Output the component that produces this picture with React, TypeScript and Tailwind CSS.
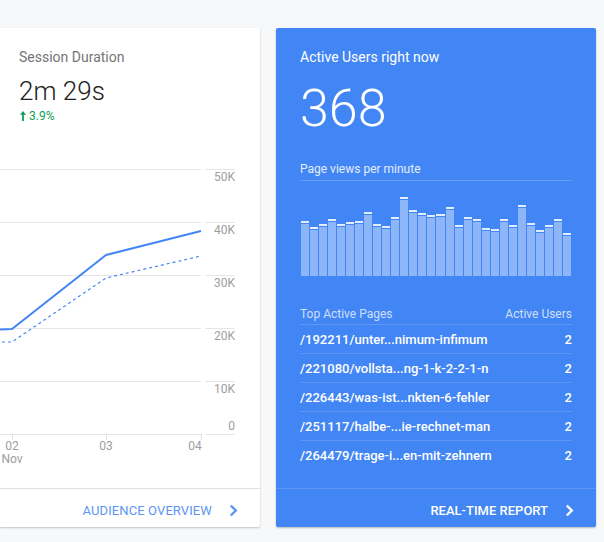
import { ComponentProps } from "react"

const bars = [55, 49, 52, 57, 52, 54, 55, 64, 52, 50, 59, 79, 66, 63, 61, 62, 69, 51, 59, 57, 48, 47, 57, 51, 71, 53, 46, 51, 57, 43]

const pages = [
    "/192211/unter...nimum-infimum",
    "/221080/vollsta...ng-1-k-2-2-1-n",
    "/226443/was-ist...nkten-6-fehler",
    "/251117/halbe-...ie-rechnet-man",
    "/264479/trage-i...en-mit-zehnern",
]

const Chevron = ({ className, ...props }: ComponentProps<'svg'>) => (
    <svg {...props} className={className} width="9" height="13" viewBox="0 0 9 13" fill="none">
        <polyline points="1.8,1.5 6.8,6.5 1.8,11.5" stroke="currentColor" strokeWidth="2.4" />
    </svg>
)

const grid = [29, 82, 135, 188, 241, 294]
const yLabels = ["50K", "40K", "30K", "20K", "10K"]

const SessionCard = () => {
    return (
        <div className="w-[260px] h-[499px] bg-white rounded-r-[2px] shadow-[0_1px_2px_rgba(0,0,0,0.22)] flex flex-col shrink-0">
            <div className="h-[112px] pl-[19px] pt-[19px] flex flex-col">
                <span className="text-[14px] leading-5 text-[#757575]">Session Duration</span>
                <span className="mt-2 text-[26px] leading-8 font-light text-[#212121]">2m 29s</span>
                <span className="mt-[1px] flex items-center gap-[3px] text-[12px] leading-4 text-[#0f9d58]">
                    <svg width="6" height="10" viewBox="0 0 6 10" className="ml-[1px]">
                        <path d="M3 0 L6 3.8 L3.9 3.8 L3.9 10 L2.1 10 L2.1 3.8 L0 3.8 Z" fill="currentColor" />
                    </svg>
                    3.9%
                </span>
            </div>
            <svg width="260" height="348" className="block" style={{ fontFamily: "Roboto, sans-serif" }}>
                {grid.map((y) => (
                    <g key={y}>
                        <line x1="0" x2="201" y1={y + 0.5} y2={y + 0.5} stroke="#e6e6e6" />
                        <line x1="205" x2="235" y1={y + 0.5} y2={y + 0.5} stroke="#e6e6e6" />
                    </g>
                ))}
                {yLabels.map((t, i) => (
                    <text key={t} x="235" y={grid[i] + 12} textAnchor="end" fontSize="12" fill="#9e9e9e">{t}</text>
                ))}
                <text x="235" y="290" textAnchor="end" fontSize="12" fill="#9e9e9e">0</text>
                {[12, 106, 201].map((x) => (
                    <line key={x} x1={x + 0.5} x2={x + 0.5} y1="294" y2="300" stroke="#e0e0e0" />
                ))}
                <text x="12" y="310" textAnchor="middle" fontSize="12" fill="#9e9e9e">02</text>
                <text x="12" y="323" textAnchor="middle" fontSize="12" fill="#9e9e9e">Nov</text>
                <text x="106" y="310" textAnchor="middle" fontSize="12" fill="#9e9e9e">03</text>
                <text x="195" y="310" textAnchor="middle" fontSize="12" fill="#9e9e9e">04</text>
                <polyline points="-10,202 12,202 106,138 201,116" fill="none" stroke="#4285f4" strokeWidth="1.2" strokeDasharray="3 3" />
                <polyline points="-10,190 12,189 106,115 201,91" fill="none" stroke="#4285f4" strokeWidth="2" strokeLinejoin="round" />
            </svg>
            <div className="h-[39px] pt-[5px] border-t border-[#e0e0e0] flex items-center justify-end pr-[22px] gap-[17px] text-[#5c96f5]">
                <span className="text-[13px] tracking-[0.1px]">AUDIENCE OVERVIEW</span>
                <Chevron />
            </div>
        </div>
    )
}

const ActiveUsersCard = () => {
    return (
        <div className="w-[320px] h-[499px] bg-[#4285f4] rounded-[2px] shadow-[0_1px_2px_rgba(0,0,0,0.25)] flex flex-col text-white shrink-0">
            <div className="flex-1 px-6 pt-[19px] flex flex-col">
                <span className="text-[14px] leading-5">Active Users right now</span>
                <span className="mt-4 text-[52px] leading-[52px] font-light">368</span>
                <div className="mt-[26px] pb-[3px] border-b border-white/20 text-[12px] leading-4 text-white/85">Page views per minute</div>
                <div className="h-[95px] flex items-end gap-[1px] px-[1px]">
                    {bars.map((h, i) => (
                        <div key={i} className="flex-1 flex flex-col" style={{ height: h }}>
                            <div className="h-[2px] bg-white/85" />
                            <div className="flex-1 mt-[1px] bg-white/40" />
                        </div>
                    ))}
                </div>
                <div className="mt-[29px] pt-[1px] flex justify-between pb-[2px] border-b border-white/15 text-[12px] leading-4 text-white/75">
                    <span>Top Active Pages</span>
                    <span>Active Users</span>
                </div>
                {pages.map((p, i) => (
                    <div key={p} className={`h-[29px] pt-[1px] flex justify-between items-center text-[13px] font-medium ${i < pages.length - 1 ? 'border-b border-white/15' : ''}`}>
                        <span>{p}</span>
                        <span>2</span>
                    </div>
                ))}
            </div>
            <div className="h-[39px] pt-[5px] border-t border-white/15 flex items-center justify-end pr-[22px] gap-[17px]">
                <span className="text-[13px] font-medium">REAL-TIME REPORT</span>
                <Chevron />
            </div>
        </div>
    )
}

export default function App() {
    return (
        <div className="w-[604px] h-[542px] bg-[#f7f8fa] font-['Roboto',sans-serif] pt-7 flex gap-4 overflow-hidden">
            <SessionCard />
            <ActiveUsersCard />
        </div>
    )
}
